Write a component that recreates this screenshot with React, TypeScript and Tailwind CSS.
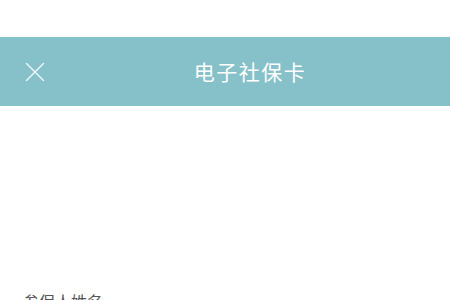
export default function App() {
  return (
    <div
      className="w-[450px] h-[300px] overflow-hidden bg-white"
      style={{ fontFamily: '"Noto Sans CJK SC", "Noto Sans", sans-serif' }}
    >
      <div className="h-[37px]" />
      <div className="h-[69px] bg-[#86c1c9] flex items-center">
        <div className="w-[68px] flex items-center justify-center pl-[2px]">
          <svg width="20" height="20" viewBox="0 0 20 20" fill="none">
            <path d="M1.5 1.5 L18.5 18.5 M18.5 1.5 L1.5 18.5" stroke="#e8f4f5" strokeWidth="1.6" strokeLinecap="round" />
          </svg>
        </div>
        <div className="flex-1 flex justify-center">
          <span className="text-[21px] text-white tracking-[1.5px] ml-[-18px] leading-none">电子社保卡</span>
        </div>
      </div>
      <div className="h-[187px]" />
      <div className="pl-[23px] text-[16px] text-[#555] leading-none">参保人姓名</div>
    </div>
  );
}
